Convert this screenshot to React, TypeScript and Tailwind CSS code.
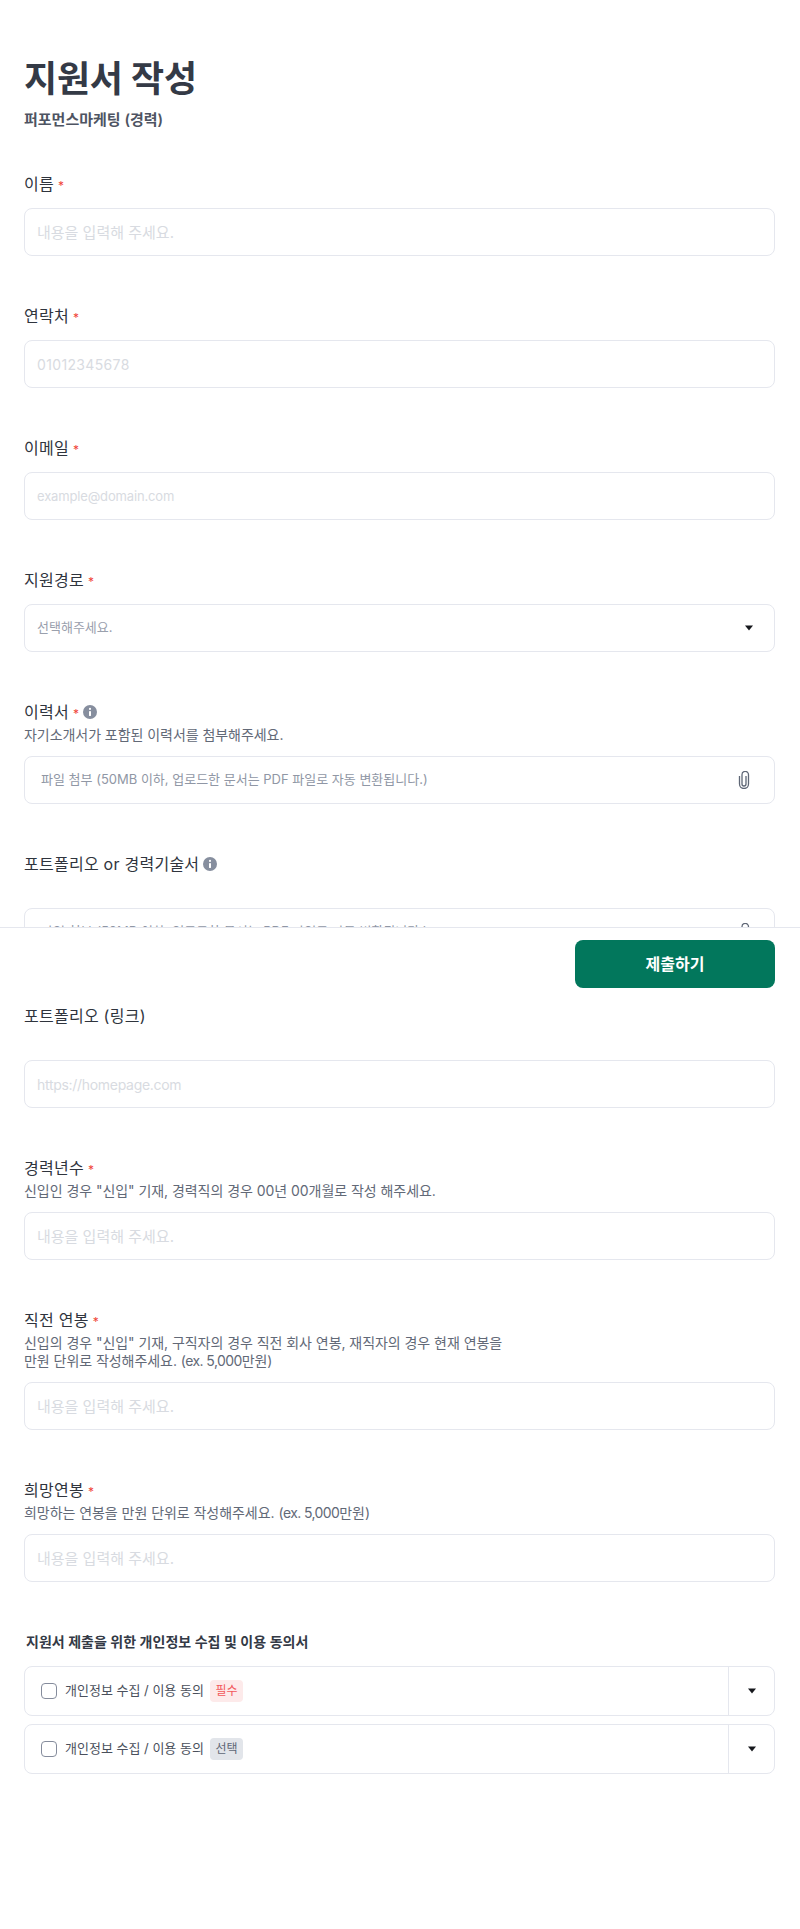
import { ReactNode } from "react";

const fontStack = "font-['Inter','Noto_Sans_CJK_KR',sans-serif]";

function InfoIcon() {
  return (
    <svg width="14" height="14" viewBox="0 0 14 14" className="ml-1 shrink-0">
      <circle cx="7" cy="7" r="7" fill="#868e9e" />
      <circle cx="7" cy="3.9" r="1.05" fill="#fff" />
      <rect x="6" y="6" width="2" height="5" rx="0.4" fill="#fff" />
    </svg>
  );
}

function ClipIcon() {
  return (
    <svg width="12" height="18" viewBox="0 0 12 18" fill="none" stroke="#5f6776" strokeWidth="1.3" className="shrink-0">
      <path d="M8 5V13a2 2 0 0 1-4 0V3.7a3.25 3.25 0 0 1 6.5 0V13a4.5 4.5 0 0 1-9 0V5" />
    </svg>
  );
}

function Caret() {
  return (
    <svg width="10" height="6" viewBox="0 0 10 6" className="shrink-0">
      <path d="M1 0.5h8L5 5.5z" fill="#16181d" />
    </svg>
  );
}

function Label({ text, required, info }: { text: string; required?: boolean; info?: boolean }) {
  return (
    <div className="flex h-6 items-center text-base leading-6 tracking-[0.25px] text-[#2f343d]">
      <span>{text}</span>
      {required && <span className="ml-1 pt-1 text-xs leading-5 text-[#f04438]">*</span>}
      {info && <InfoIcon />}
    </div>
  );
}

function Field({ label, required, info, desc, gap = "mt-3", children }: {
  label: string;
  required?: boolean;
  info?: boolean;
  desc?: ReactNode;
  gap?: string;
  children: ReactNode;
}) {
  return (
    <div className="mb-12">
      <Label text={label} required={required} info={info} />
      {desc && <p className="mt-0.5 text-sm leading-[18px] tracking-[-0.05px] text-[#626977]">{desc}</p>}
      <div className={gap}>{children}</div>
    </div>
  );
}

function TextInput({ placeholder, size = "text-[15px]" }: { placeholder: string; size?: string }) {
  return (
    <input
      placeholder={placeholder}
      className={`block h-12 w-full rounded-lg border border-[#e5e7ee] px-3 text-[#2f343d] outline-none placeholder:text-[#d8dbe1] ${size}`}
    />
  );
}

function FileInput() {
  return (
    <div className="flex h-12 items-center justify-between rounded-lg border border-[#e5e7ee] pl-4 pr-[24px] text-[13px] text-[#9097a5]">
      <span>파일 첨부 (50MB 이하, 업로드한 문서는 PDF 파일로 자동 변환됩니다.)</span>
      <ClipIcon />
    </div>
  );
}

function ConsentRow({ badge, badgeClass }: { badge: string; badgeClass: string }) {
  return (
    <div className="flex h-[50px] items-stretch rounded-lg border border-[#e5e7ee]">
      <div className="flex flex-1 items-center pl-4">
        <span className="h-4 w-4 rounded-[4px] border border-[#858c9c]" />
        <span className="ml-2 text-[13px] text-[#4a505c]">개인정보 수집 / 이용 동의</span>
        <span className={`ml-1.5 flex h-[22px] w-[33px] items-center justify-center rounded text-xs ${badgeClass}`}>{badge}</span>
      </div>
      <div className="flex w-[46px] items-center justify-center border-l border-[#e5e7ee]">
        <Caret />
      </div>
    </div>
  );
}

export default function App() {
  return (
    <div className={`relative h-[1929px] overflow-hidden bg-white ${fontStack}`}>
      <main className="pt-[55px] pr-[25px] pl-6">
        <h1 className="text-4xl leading-[48px] font-bold tracking-[-0.2px] text-[#343a46]">지원서 작성</h1>
        <p className="mt-[5px] text-[15px] leading-6 font-semibold text-[#4e5462]">퍼포먼스마케팅 (경력)</p>

        <div className="mt-10">
          <Field label="이름" required>
            <TextInput placeholder="내용을 입력해 주세요." />
          </Field>
          <Field label="연락처" required>
            <TextInput placeholder="01012345678" size="text-sm tracking-[0.35px]" />
          </Field>
          <Field label="이메일" required>
            <TextInput placeholder="example@domain.com" size="text-[13px] tracking-[-0.15px]" />
          </Field>
          <Field label="지원경로" required>
            <div className="flex h-12 items-center justify-between rounded-lg border border-[#e5e7ee] pl-3 pr-[20px] text-[13px] text-[#9aa0ad]">
              <span>선택해주세요.</span>
              <Caret />
            </div>
          </Field>
          <Field label="이력서" required info desc="자기소개서가 포함된 이력서를 첨부해주세요.">
            <FileInput />
          </Field>
          <Field label="포트폴리오 or 경력기술서" info gap="mt-8">
            <FileInput />
          </Field>
          <Field label="포트폴리오 (링크)" gap="mt-8">
            <TextInput placeholder="https://homepage.com" size="text-sm tracking-[-0.3px]" />
          </Field>
          <Field label="경력년수" required desc={'신입인 경우 "신입" 기재, 경력직의 경우 00년 00개월로 작성 해주세요.'}>
            <TextInput placeholder="내용을 입력해 주세요." />
          </Field>
          <Field
            label="직전 연봉"
            required
            desc={
              <>
                신입의 경우 "신입" 기재, 구직자의 경우 직전 회사 연봉, 재직자의 경우 현재 연봉을
                <br />
                만원 단위로 작성해주세요. <span className="tracking-[-0.6px]">(ex. 5,000</span>만원)
              </>
            }
          >
            <TextInput placeholder="내용을 입력해 주세요." />
          </Field>
          <Field
            label="희망연봉"
            required
            desc={<>희망하는 연봉을 만원 단위로 작성해주세요. <span className="tracking-[-0.6px]">(ex. 5,000</span>만원)</>}
          >
            <TextInput placeholder="내용을 입력해 주세요." />
          </Field>
        </div>

        <h2 className="pl-0.5 text-sm leading-6 font-semibold text-[#343a46]">지원서 제출을 위한 개인정보 수집 및 이용 동의서</h2>
        <div className="mt-3 flex flex-col gap-2">
          <ConsentRow badge="필수" badgeClass="bg-[#fdeaea] text-[#f2585b]" />
          <ConsentRow badge="선택" badgeClass="bg-[#e2e5ea] text-[#5f6776]" />
        </div>
      </main>

      {/* sticky submit bar */}
      <div className="absolute inset-x-0 top-[927px] flex h-[73px] justify-end border-t border-[#e5e7ee] bg-white pt-3 pr-[25px] pl-6">
        <button className="h-12 w-[200px] rounded-lg bg-[#02775c] text-base font-semibold text-white">제출하기</button>
      </div>
    </div>
  );
}
